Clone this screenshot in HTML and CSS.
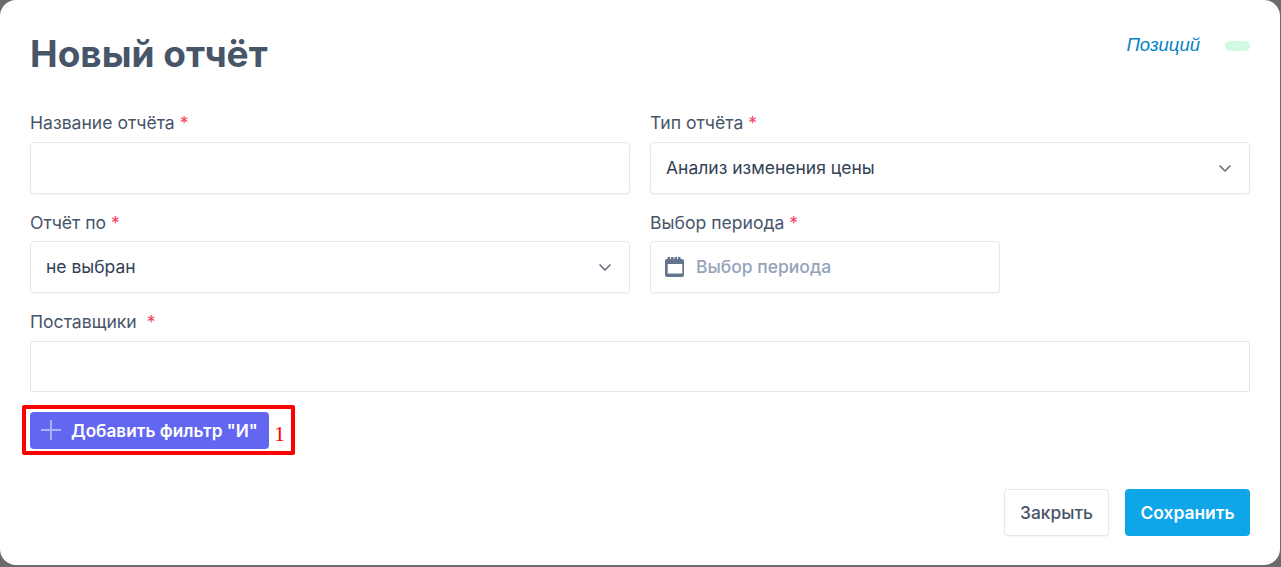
FILE: index.html
```html
<!DOCTYPE html>
<html lang="ru">
<head>
<meta charset="utf-8">
<title>Новый отчёт</title>
<link rel="stylesheet" href="styles.css">
</head>
<body>
<main class="modal">
  <header class="head">
    <h1 class="title">Новый отчёт</h1>
    <div class="counter">
      <span class="counter-label">Позиций</span>
      <span class="counter-pill"></span>
    </div>
  </header>
  <div class="form">
    <div class="field">
      <label class="label">Название отчёта <span class="req">*</span></label>
      <div class="control"></div>
    </div>
    <div class="field">
      <label class="label">Тип отчёта <span class="req">*</span></label>
      <div class="control select">
        <span>Анализ изменения цены</span>
        <svg class="chev" viewBox="0 0 20 20" fill="none"><path d="M5 8l5 5 5-5" stroke="#6b7280" stroke-width="1.7" stroke-linecap="round" stroke-linejoin="round"/></svg>
      </div>
    </div>
    <div class="field">
      <label class="label label-low">Отчёт по <span class="req">*</span></label>
      <div class="control select">
        <span>не выбран</span>
        <svg class="chev" viewBox="0 0 20 20" fill="none"><path d="M5 8l5 5 5-5" stroke="#6b7280" stroke-width="1.7" stroke-linecap="round" stroke-linejoin="round"/></svg>
      </div>
    </div>
    <div class="field">
      <label class="label label-low">Выбор периода <span class="req">*</span></label>
      <div class="control date">
        <svg class="cal" viewBox="0 0 20 20"><path fill="#64748b" fill-rule="evenodd" d="M2.500 0h2.500v2h1V0h2.500v2h1V0h2.500v2h1V0h2.500v2h1.500a2 2 0 0 1 2 2v14a2 2 0 0 1-2 2H2a2 2 0 0 1-2-2V4a2 2 0 0 1 2-2h.5V0zM2.700 7v9.500h14.600V7H2.700z"/></svg>
        <span class="placeholder">Выбор периода</span>
      </div>
    </div>
    <div class="field wide">
      <label class="label">Поставщики&nbsp; <span class="req">*</span></label>
      <div class="control square"></div>
    </div>
  </div>
  <div class="add-row">
    <button class="btn-add" type="button"><svg class="plus" viewBox="0 0 20 20"><path d="M10 0v20M0 10h20" stroke="#a5b4fc" stroke-width="2"/></svg>Добавить фильтр "И"</button>
    <span class="mark">1</span>
  </div>
  <footer class="foot">
    <button class="btn btn-close" type="button">Закрыть</button>
    <button class="btn btn-save" type="button">Сохранить</button>
  </footer>
</main>
</body>
</html>
```
FILE: styles.css
```css
* { box-sizing: border-box; }
html, body { margin: 0; height: 100%; }
body {
  background: #6b6b6b;
  font-family: Inter, "Liberation Sans", sans-serif;
  color: #475569;
  overflow: hidden;
}
.modal {
  width: 1280px;
  height: 565px;
  background: #fff;
  border-radius: 16px;
  padding: 32px 30px 29px 30px;
  display: flex;
  flex-direction: column;
}
.head {
  display: flex;
  justify-content: space-between;
  align-items: flex-start;
  height: 80px;
}
.title {
  margin: 0;
  font-size: 37px;
  line-height: 44px;
  font-weight: 700;
  color: #475569;
}
.counter {
  display: flex;
  align-items: center;
  gap: 25px;
  height: 26px;
}
.counter-label {
  font-family: "Liberation Sans", sans-serif;
  font-style: italic;
  font-size: 18.5px;
  color: #0284c7;
}
.counter-pill {
  width: 25px;
  height: 10px;
  margin-top: 2px;
  border-radius: 5px;
  background: #d1fae5;
}
.form {
  display: grid;
  grid-template-columns: 600px 600px;
  column-gap: 20px;
  row-gap: 17px;
}
.label {
  display: block;
  font-size: 17.6px;
  line-height: 22px;
  margin-bottom: 8px;
  font-weight: 400;
  color: #475569;
}
.label-low { padding-top: 1px; margin-bottom: 7px; }
.req { color: #f43f5e; }
.control {
  height: 52px;
  border: 1px solid #e2e8f0;
  border-radius: 4px;
  box-shadow: 0 1px 2px rgba(15, 23, 42, .05);
  background: #fff;
  display: flex;
  align-items: center;
  font-size: 17.5px;
  line-height: 22px;
  color: #334155;
  padding: 0 15px;
}
.select { justify-content: space-between; padding-right: 14px; }
.chev { width: 20px; height: 20px; }
.date { width: 350px; gap: 11px; padding-left: 14px; }
.cal { width: 20px; height: 20px; flex: none; }
.placeholder { color: #94a3b8; font-weight: 500; }
.wide { grid-column: 1 / -1; margin-top: 1px; }
.square { height: 51px; border-radius: 0; box-shadow: none; border-color: #e5e7eb; }
.add-row {
  display: flex;
  align-items: center;
  align-self: flex-start;
  margin: 13px 0 0 -8px;
  width: 273px;
  height: 50px;
  border: 4px solid #f00;
  border-radius: 2px;
  padding-left: 4px;
}
.btn-add {
  display: flex;
  align-items: center;
  flex: none;
  height: 37px;
  width: 239px;
  padding: 0 0 0 11px;
  border: 0;
  border-radius: 4px;
  background: #6366f1;
  color: #fff;
  font: 600 17.2px Inter, "Liberation Sans", sans-serif;
  white-space: nowrap;
}
.plus { width: 20px; height: 20px; margin-right: 10px; flex: none; }
.mark {
  margin: 8px 0 0 5px;
  font-family: "Liberation Serif", serif;
  font-size: 22px;
  line-height: 22px;
  color: #f00;
}
.foot {
  margin-top: auto;
  display: flex;
  justify-content: flex-end;
  gap: 16px;
}
.btn {
  height: 47px;
  padding: 0 15px;
  border-radius: 4px;
  font: 500 17.4px Inter, "Liberation Sans", sans-serif;
}
.btn-close { width: 105px; padding: 0; background: #fff; border: 1px solid #e2e8f0; color: #475569; box-shadow: 0 1px 2px rgba(15, 23, 42, .05); }
.btn-save { width: 125px; padding: 0; background: #0ea5e9; border: 0; color: #fff; font-weight: 600; }
```
